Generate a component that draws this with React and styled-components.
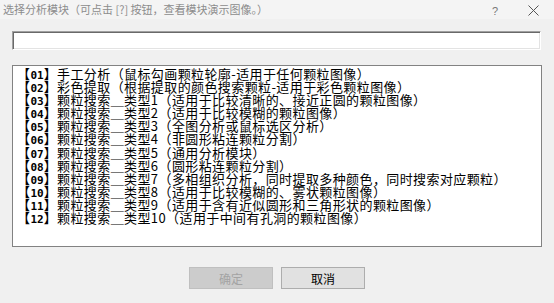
import React from 'react';
import styled, { createGlobalStyle } from 'styled-components';

const items = [
  ['01', '手工分析（鼠标勾画颗粒轮廓-适用于任何颗粒图像）'],
  ['02', '彩色提取（根据提取的颜色搜索颗粒-适用于彩色颗粒图像）'],
  ['03', '颗粒搜索＿类型1（适用于比较清晰的、接近正圆的颗粒图像）'],
  ['04', '颗粒搜索＿类型2（适用于比较模糊的颗粒图像）'],
  ['05', '颗粒搜索＿类型3（全图分析或鼠标选区分析）'],
  ['06', '颗粒搜索＿类型4（非圆形粘连颗粒分割）'],
  ['07', '颗粒搜索＿类型5（通用分析模块）'],
  ['08', '颗粒搜索＿类型6（圆形粘连颗粒分割）'],
  ['09', '颗粒搜索＿类型7（多相组织分析，同时提取多种颜色，同时搜索对应颗粒）'],
  ['10', '颗粒搜索＿类型8（适用于比较模糊的、雾状颗粒图像）'],
  ['11', '颗粒搜索＿类型9（适用于含有近似圆形和三角形状的颗粒图像）'],
  ['12', '颗粒搜索＿类型10（适用于中间有孔洞的颗粒图像）'],
];

const App = () => {
  return (
    <>
      <GlobalStyle />
      <Window>
        <TitleBar>
          <Title>选择分析模块（可点击 [?] 按钮，查看模块演示图像。）</Title>
          <TitleButtons>
            <HelpButton>?</HelpButton>
            <CloseButton>
              <svg width="11" height="11" viewBox="0 0 11 11">
                <path d="M0.5 0.5 L10.5 10.5 M10.5 0.5 L0.5 10.5" stroke="#555" strokeWidth="1" />
              </svg>
            </CloseButton>
          </TitleButtons>
        </TitleBar>
        <Body>
          <SearchInput />
          <ModuleList>
            {items.map(([num, text]) => (
              <ModuleItem key={num}>
                【<Num>{num}</Num>】{text}
              </ModuleItem>
            ))}
          </ModuleList>
          <Footer>
            <DialogButton disabled>确定</DialogButton>
            <DialogButton>取消</DialogButton>
          </Footer>
        </Body>
      </Window>
    </>
  );
};

const GlobalStyle = createGlobalStyle`
  html, body {
    margin: 0;
    padding: 0;
    background: #f0f0f0;
  }
  * {
    box-sizing: border-box;
  }
`;

const Window = styled.div`
  width: 554px;
  height: 303px;
  display: flex;
  flex-direction: column;
  background: #f0f0f0;
  font-family: "Noto Sans CJK SC", "Noto Sans", sans-serif;
  overflow: hidden;
`;

const TitleBar = styled.div`
  height: 19px;
  display: flex;
  justify-content: space-between;
  align-items: center;
  padding-left: 3px;
  background: #f4f4f4;
`;

const Title = styled.div`
  font-size: 11px;
  line-height: 14px;
  color: #8c8c8c;
  white-space: nowrap;
  margin-top: -2px;
`;

const TitleButtons = styled.div`
  display: flex;
  align-items: center;
  height: 100%;
`;

const HelpButton = styled.div`
  width: 40px;
  text-align: center;
  font-family: "Liberation Sans", sans-serif;
  font-size: 11px;
  color: #777;
  margin-top: 2px;
  padding-left: 4px;
`;

const CloseButton = styled.div`
  width: 40px;
  display: flex;
  justify-content: center;
  align-items: center;
  margin-right: 1px;
  margin-top: 2px;
`;

const Body = styled.div`
  display: flex;
  flex-direction: column;
  padding: 0 13px 0 12px;
`;

const SearchInput = styled.div`
  margin-top: 12px;
  height: 19px;
  background: #fff;
  border: 1px solid;
  border-color: #a0a0a0 #ffffff #ffffff #a0a0a0;
  box-shadow: inset 1px 1px 0 #696969, inset -1px -1px 0 #e3e3e3;
`;

const ModuleList = styled.div`
  margin-top: 15px;
  height: 182px;
  width: 530px;
  background: #fff;
  border: 1px solid #828282;
  padding: 1px 4px;
`;

const ModuleItem = styled.div`
  font-size: 13px;
  letter-spacing: 0.4px;
  line-height: 13.1px;
  height: 13.1px;
  color: #000;
  white-space: nowrap;
`;

const Num = styled.span`
  font-family: "DejaVu Sans Mono", monospace;
  font-weight: 700;
  font-size: 11px;
  letter-spacing: 0;
`;

const Footer = styled.div`
  display: flex;
  justify-content: center;
  gap: 8px;
  margin-top: 20px;
  padding-left: 1px;
`;

const DialogButton = styled.button`
  width: 84px;
  height: 22px;
  padding: 0;
  font-family: "Noto Sans CJK SC", sans-serif;
  font-size: 12px;
  color: ${({ disabled }) => (disabled ? '#a3a3a3' : '#000')};
  background: ${({ disabled }) => (disabled ? '#cccccc' : '#e1e1e1')};
  border: 1px solid ${({ disabled }) => (disabled ? '#bfbfbf' : '#adadad')};
  border-radius: 0;
`;

export default App;
